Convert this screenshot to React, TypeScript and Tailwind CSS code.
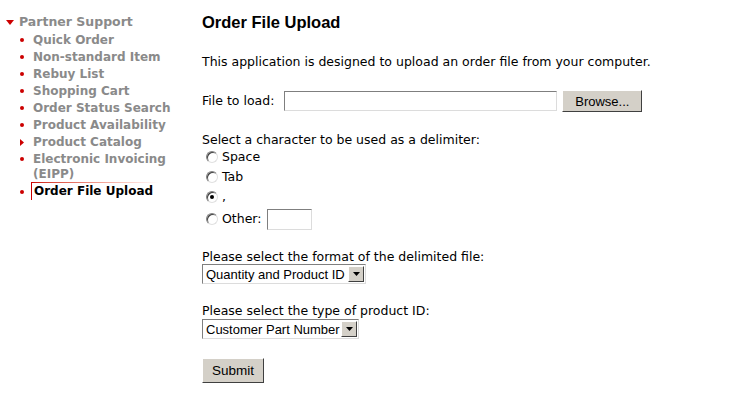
import React from 'react';

const navItems = [
  { label: 'Quick Order' },
  { label: 'Non-standard Item' },
  { label: 'Rebuy List' },
  { label: 'Shopping Cart' },
  { label: 'Order Status Search' },
  { label: 'Product Availability' },
  { label: 'Product Catalog', arrow: true },
  { label: 'Electronic Invoicing (EIPP)' },
];

const Radio: React.FC<{ checked?: boolean }> = ({ checked }) => (
  <span className="relative inline-block shrink-0 w-[12px] h-[12px] rounded-full bg-white border border-t-[#808080] border-l-[#808080] border-r-[#e0e0e0] border-b-[#e0e0e0] shadow-[inset_1px_1px_0_#404040]">
    {checked && <span className="absolute left-[3px] top-[3px] w-[4px] h-[4px] rounded-full bg-black" />}
  </span>
);

const SelectBox: React.FC<{ value: string; width: string }> = ({ value, width }) => (
  <div className={`flex items-center h-[20px] ${width} bg-white border border-t-[#7f7f7f] border-l-[#7f7f7f] border-r-[#dcdcdc] border-b-[#dcdcdc]`}>
    <span className="flex-1 pl-[3px] text-[13px] text-black font-['Liberation_Sans',Arial,sans-serif] leading-none whitespace-nowrap">{value}</span>
    <span className="flex items-center justify-center w-[16px] h-[16px] mr-[1px] bg-[#d4d0c8] border border-t-white border-l-white border-r-[#404040] border-b-[#404040]">
      <svg width="7" height="4" viewBox="0 0 7 4"><path d="M0 0h7L3.5 4z" fill="#000" /></svg>
    </span>
  </div>
);

const App: React.FC = () => {
  return (
    <div className="w-[751px] h-[404px] bg-white flex font-['DejaVu_Sans',Verdana,sans-serif] text-[12.5px] text-black">
      {/* Left navigation */}
      <div className="w-[202px] shrink-0 pt-[14px]">
        <div className="flex items-center h-[17px] text-[#8a8a8a] font-bold text-[12.5px]">
          <span className="w-[19px] flex justify-center">
            <svg width="8" height="5" viewBox="0 0 8 5"><path d="M0 0h8L4 5z" fill="#cc0000" /></svg>
          </span>
          Partner Support
        </div>
        <ul className="mt-[1px]">
          {navItems.map((item) => (
            <li key={item.label} className="flex items-start text-[#8a8a8a] font-bold text-[12px] leading-[17px]">
              <span className="w-[33px] shrink-0 flex pl-[20px] pt-[6px]">
                {item.arrow ? (
                  <svg width="4" height="7" viewBox="0 0 4 7" className="-mt-[1px]"><path d="M0 0l4 3.5L0 7z" fill="#cc0000" /></svg>
                ) : (
                  <span className="block w-[4px] h-[4px] rounded-full bg-[#cc0000]" />
                )}
              </span>
              <span className="w-[140px] leading-[15px] pt-[1px] pb-[1px]">{item.label}</span>
            </li>
          ))}
          <li className="flex items-start font-bold text-[12px] leading-[17px] -mt-[1px]">
            <span className="w-[33px] shrink-0 flex pl-[20px] pt-[8px]">
              <span className="block w-[4px] h-[4px] rounded-full bg-[#cc0000]" />
            </span>
            <span className="-ml-[2px] pl-[2px] pt-[1px] border-l-[1px] border-[#cc0000] relative text-black w-[128px]">
              <span className="absolute left-0 top-0 h-[1px] w-full bg-gradient-to-r from-[#cc0000] to-white" />
              Order File Upload
            </span>
          </li>
        </ul>
      </div>

      {/* Main content */}
      <div className="flex-1 pt-[13px]">
        <h1 className="font-['Liberation_Sans',Arial,sans-serif] font-bold text-[16.5px] leading-[18px]">Order File Upload</h1>
        <p className="mt-[23px] leading-[15px]">This application is designed to upload an order file from your computer.</p>

        <div className="mt-[21px] flex items-center h-[22px]">
          <span>File to load:</span>
          <div className="ml-[10px] w-[273px] h-[20px] bg-white border border-t-[#7f7f7f] border-l-[#7f7f7f] border-r-[#dcdcdc] border-b-[#dcdcdc]" />
          <button className="ml-[5px] w-[80px] h-[22px] bg-[#d4d0c8] border border-t-white border-l-white border-r-[#404040] border-b-[#404040] text-[13px] font-['Liberation_Sans',Arial,sans-serif] leading-none">
            Browse...
          </button>
        </div>

        <p className="mt-[20px] leading-[15px]">Select a character to be used as a delimiter:</p>
        <div className="flex flex-col">
          <label className="flex items-center h-[20px] pl-[4px] gap-[4px]"><Radio /><span>Space</span></label>
          <label className="flex items-center h-[20px] pl-[4px] gap-[4px]"><Radio /><span>Tab</span></label>
          <label className="flex items-center h-[20px] pl-[4px] gap-[4px]"><Radio checked /><span>,</span></label>
          <label className="flex items-center h-[24px] pl-[4px] gap-[4px]">
            <Radio /><span>Other:</span>
            <span className="ml-[2px] inline-block w-[45px] h-[21px] bg-white border border-t-[#7f7f7f] border-l-[#7f7f7f] border-r-[#dcdcdc] border-b-[#dcdcdc]" />
          </label>
        </div>

        <p className="mt-[18px] leading-[15px]">Please select the format of the delimited file:</p>
        <SelectBox value="Quantity and Product ID" width="w-[164px]" />

        <p className="mt-[19px] leading-[15px]">Please select the type of product ID:</p>
        <div className="mt-[1px]">
          <SelectBox value="Customer Part Number" width="w-[157px]" />
        </div>

        <button className="mt-[19px] w-[62px] h-[25px] bg-[#d4d0c8] border border-t-white border-l-white border-r-[#404040] border-b-[#404040] text-[13.5px] font-['Liberation_Sans',Arial,sans-serif] leading-none">
          Submit
        </button>
      </div>
    </div>
  );
};

export default App;
